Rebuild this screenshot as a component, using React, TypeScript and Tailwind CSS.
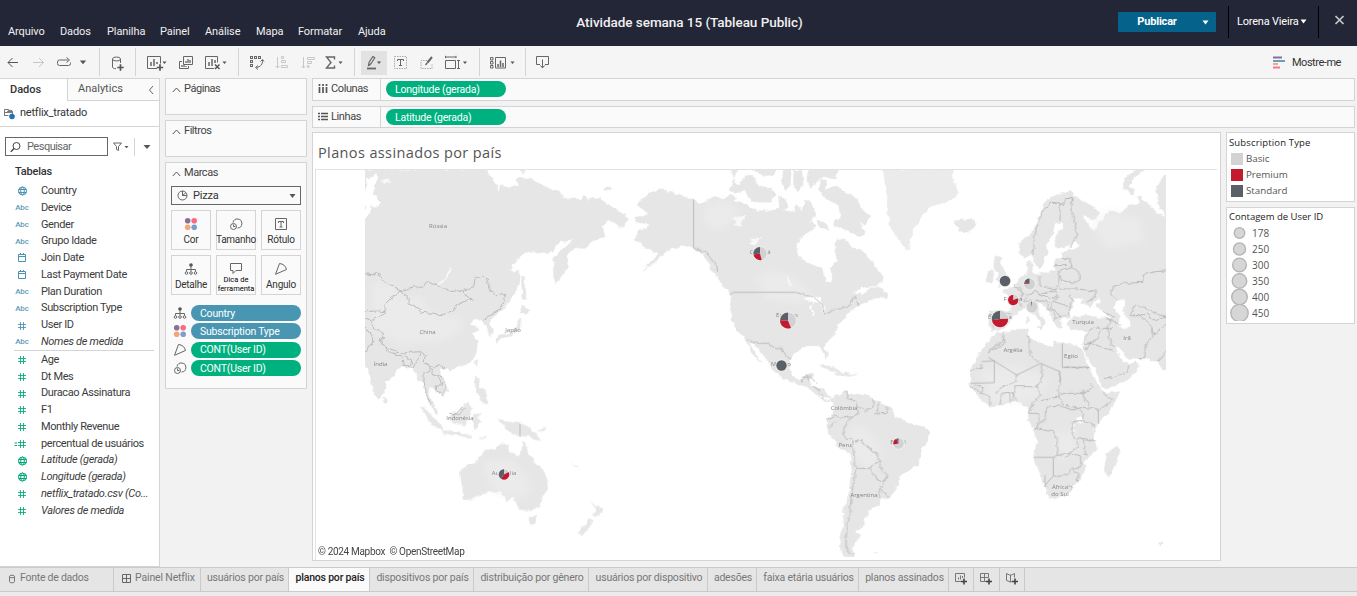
import React from "react";

type Kids = { children?: React.ReactNode };

/* ---------- Toolbar ---------- */

function Tool({ x, w, active, children }: Kids & { x: number; w: number; active?: boolean }) {
  return (
    <button className="flex h-8 shrink-0 items-center">
      <svg width={w} height={32} viewBox={`${x} 46 ${w} 32`} fill="none" stroke="#666" strokeWidth="1">
        {active && <rect x={x} y={51} width={w} height={24} fill="#e2e2e2" stroke="none" />}
        {children}
      </svg>
    </button>
  );
}

function Sep() {
  return <div className="my-0.5 w-px shrink-0 self-stretch bg-[#d4d4d4]" />;
}

function Caret({ x, y, s = 2 }: { x: number; y: number; s?: number }) {
  return <path d={`M${x - s} ${y - s / 2}h${s * 2}l${-s} ${s * 1.2}z`} fill="#555" stroke="none" />;
}

function Plus({ x, y }: { x: number; y: number }) {
  return <path d={`M${x - 3.2} ${y}h6.4M${x} ${y - 3.2}v6.4`} stroke="#555" strokeWidth="1.7" />;
}

function Toolbar() {
  return (
    <div className="flex h-8 shrink-0 items-center bg-[#f5f5f5]">
      <Tool x={0} w={25}>
        <path d="M18 62.5H8M12.5 58l-4.500 4.500 4.500 4.500" stroke="#555" />
      </Tool>
      <Tool x={25} w={26}>
        <path d="M33 62.500h10.500M39 58l4.500 4.500-4.500 4.500" stroke="#c4c4c4" />
      </Tool>
      <Tool x={51} w={48}>
        <path d="M68 65.500h-8.500a2 2 0 0 1-2-2v-1.500a2 2 0 0 1 2-2h8.500M66.500 57.500l3 2.500-3 2.500M68 65.500h.5a2 2 0 0 0 2-2v-1" />
        <Caret x={83} y={62} s={3.2} />
      </Tool>
      <Sep />
      <Tool x={100} w={35}>
        <ellipse cx="116.500" cy="59" rx="4" ry="2" />
        <path d="M112.500 59v8c0 1 1.500 1.700 3.500 1.700M120.500 59v4" />
        <Plus x={120.5} y={67.5} />
      </Tool>
      <Sep />
      <Tool x={136} w={34}>
        <path d="M157 68.500h-9.500v-12h13v7" />
        <path d="M151 66v-4M154 66v-7M157 64v-2" strokeWidth="1.500" />
        <Plus x={160} y={67.5} />
        <Caret x={164.5} y={62.5} s={2} />
      </Tool>
      <Tool x={170} w={30}>
        <path d="M183.500 56.500h9v8h-9zM182 61.500h-2.500v7h9v-2.500" />
        <path d="M186 63v-2M188 63v-4M190 63v-3M182 67v-2M184 67v-2M186 67v-1" strokeWidth="1.300" />
      </Tool>
      <Tool x={200} w={38}>
        <path d="M214 68.500h-8.500v-12h12v6" />
        <path d="M209 66v-4M212 66v-7M215 63v-3" strokeWidth="1.500" />
        <path d="M215 64.500l4.500 4.500M219.500 64.500l-4.500 4.500" stroke="#555" strokeWidth="1.500" />
        <Caret x={224.5} y={62.5} s={2} />
      </Tool>
      <Sep />
      <Tool x={239} w={30}>
        <rect x="250.500" y="56.500" width="2" height="2" />
        <rect x="254.500" y="56.500" width="2" height="2" />
        <rect x="258.500" y="56.500" width="2" height="2" />
        <rect x="250.500" y="60.500" width="2" height="2" />
        <rect x="250.500" y="64.500" width="2" height="2" />
        <path d="M262.500 60c.5 4-2 7-6 7.500M260.500 61.500l2-2 1.500 2M258 65.500l-2.500 2 2.500 2" />
      </Tool>
      <Tool x={269} w={26}>
        <path d="M277.500 57v11M275.500 66l2 2 2-2M281.500 56.500h2v2h-2zM281.500 60.500h4v2h-4zM281.500 65.500h6v2h-6z" stroke="#c8c8c8" />
      </Tool>
      <Tool x={295} w={25}>
        <path d="M303.500 57v11M301.500 66l2 2 2-2M307.500 57.500h7v2h-7zM307.500 61.500h4v2h-4zM307.500 65.500h1.500v2h-1.500z" stroke="#c8c8c8" />
      </Tool>
      <Tool x={320} w={34}>
        <path d="M334.500 59.500v-2.500h-8l4.500 5.500-4.500 5.500h8v-2.500" strokeWidth="1.400" />
        <Caret x={340.5} y={62.5} s={2} />
      </Tool>
      <Sep />
      <div className="w-1.5 shrink-0" />
      <Tool x={361} w={26} active>
        <path d="M367 68.500h9" strokeWidth="1.800" />
        <path d="M368.500 65.500l.5-3 3.800-6 2 1.200-3.800 6zM371 63.500l-2 2" strokeWidth="1.200" />
        <Caret x={379} y={62.5} s={2} />
      </Tool>
      <Tool x={387} w={26}>
        <rect x="394.500" y="56.500" width="12" height="12" stroke="#aaa" strokeDasharray="1.500 1" />
        <path d="M397.500 61v-1.500h6V61M400.500 60v5.500M399 65.500h3" />
      </Tool>
      <Tool x={413} w={25}>
        <path d="M427 60.500h-6v8h11v-5" stroke="#aaa" strokeDasharray="1.500 1" />
        <path d="M432 57l-4.500 5.500" strokeWidth="2" />
        <path d="M427.500 62.500l-2 2.500" strokeWidth="1.300" />
      </Tool>
      <Tool x={438} w={41}>
        <path d="M445.500 60.500h10v8h-10zM445 57h11M445.500 55.800v2.400M456 55.800v2.400M458.500 60.500v8M457 60.500h3M457 68.500h3" />
        <Caret x={465} y={62.5} s={2} />
      </Tool>
      <Sep />
      <Tool x={480} w={45}>
        <path d="M490.500 57.500h2.500v2.500h-2.500zM490.500 61.500h2.500v2.500h-2.500zM490.500 65.500h2.500v2.500h-2.500zM495.500 57.500h10v10.500h-10z" />
        <path d="M498 67v-3M500.500 67v-6.500M503 67v-4" strokeWidth="1.500" />
        <Caret x={512.5} y={62.5} s={2} />
      </Tool>
      <Sep />
      <Tool x={526} w={36}>
        <path d="M540 64.500h-3.500v-8h12v8H545M542.500 59.500v8M540.500 65.500l2 2.500 2-2.500" />
      </Tool>
      <div className="flex-1" />
      <svg className="mr-[7px] h-4 w-3" viewBox="0 0 12 16">
        <path d="M0 3.500h9" stroke="#8a6f96" strokeWidth="2" />
        <path d="M0 7h12" stroke="#6c9bc4" strokeWidth="2" />
        <path d="M0 10h5" stroke="#f0a986" strokeWidth="2" />
        <path d="M0 13.500h7" stroke="#f2788d" strokeWidth="2" />
      </svg>
      <span className="mr-4 pt-0.5 text-[11px] tracking-[-0.45px] text-[#333]">Mostre-me</span>
    </div>
  );
}

/* ---------- Header ---------- */

const MENU: [string, string][] = [
  ["Arquivo", "w-[52px]"],
  ["Dados", "w-[47px]"],
  ["Planilha", "w-[53px]"],
  ["Painel", "w-[45px]"],
  ["Análise", "w-[51px]"],
  ["Mapa", "w-[42px]"],
  ["Formatar", "w-[60px]"],
  ["Ajuda", "w-[40px]"],
];

function Header() {
  return (
    <header className="grid h-[46px] shrink-0 grid-cols-[1fr_auto_1fr] bg-[#232637] text-white">
      <nav className="flex items-end pb-[5px] pl-2 text-[11px] tracking-[-0.1px]">
        {MENU.map(([name, width]) => (
          <span key={name} className={`${width} shrink-0 leading-[18px] text-[#f0f0f0]`}>{name}</span>
        ))}
      </nav>
      <h1 className="pt-3 pl-[22px] text-[13.500px] leading-5 font-medium tracking-[-0.05px] whitespace-nowrap text-[#f0f0f0]">
        Atividade semana 15 (Tableau Public)
      </h1>
      <div className="flex items-start justify-end">
        <button className="mt-3 flex h-5 w-[98px] items-center rounded-[1px] bg-[#05628a] text-[11px] font-bold">
          <span className="w-[78px] text-center tracking-[-0.2px]">Publicar</span>
          <svg width="20" height="20" viewBox="0 0 20 20"><path d="M6.500 8.500h6l-3 4z" fill="#fff" /></svg>
        </button>
        <div className="mt-1.5 ml-3 flex h-8 w-[91px] items-center border-x border-black pl-2 text-[11px] tracking-[-0.2px] whitespace-nowrap">
          Lorena Vieira
          <svg width="8" height="8" viewBox="0 0 8 8"><path d="M1.500 1.500h6l-3 4z" fill="#fff" /></svg>
        </div>
        <svg className="mt-3.5 mr-3 ml-[15px]" width="11" height="12" viewBox="0 0 11 12">
          <path d="M1.500 2l8 8M9.500 2l-8 8" stroke="#c9c9cf" strokeWidth="1.700" />
        </svg>
      </div>
    </header>
  );
}

/* ---------- Data pane ---------- */

type Kind = "globe" | "abc" | "date" | "num" | "calc";

function FieldIcon({ kind, green }: { kind: Kind; green?: boolean }) {
  const c = green ? "#00a878" : "#4a93b0";
  if (kind === "abc") return <span className="w-[18px] text-center text-[8px] font-medium tracking-[-0.1px] text-[#5c9ab5]">Abc</span>;
  return (
    <svg width="18" height="12" viewBox="0 0 18 12" fill="none" stroke={c} strokeWidth="1">
      {kind === "globe" && (
        <>
          <circle cx="9.500" cy="6" r="4" />
          <ellipse cx="9.500" cy="6" rx="1.800" ry="4" />
          <path d="M5.500 4.500h8M5.500 7.500h8" />
        </>
      )}
      {kind === "date" && <path d="M5.500 2.500h7v7h-7zM5.500 4.500h7M7.500 1v2M10.500 1v2" />}
      {(kind === "num" || kind === "calc") && <path d="M7.500 2v8M10.500 2v8M5 4.500h8M5 7.500h8" opacity=".85" />}
      {kind === "calc" && <path d="M1.500 5h2.500M1.500 7.500h2.500" />}
    </svg>
  );
}

type Field = { n: string; k: Kind; i?: boolean };

const DIMENSIONS: Field[] = [
  { n: "Country", k: "globe" },
  { n: "Device", k: "abc" },
  { n: "Gender", k: "abc" },
  { n: "Grupo Idade", k: "abc" },
  { n: "Join Date", k: "date" },
  { n: "Last Payment Date", k: "date" },
  { n: "Plan Duration", k: "abc" },
  { n: "Subscription Type", k: "abc" },
  { n: "User ID", k: "num" },
  { n: "Nomes de medida", k: "abc", i: true },
];

const MEASURES: Field[] = [
  { n: "Age", k: "num" },
  { n: "Dt Mes", k: "num" },
  { n: "Duracao Assinatura", k: "num" },
  { n: "F1", k: "num" },
  { n: "Monthly Revenue", k: "num" },
  { n: "percentual de usuários", k: "calc" },
  { n: "Latitude (gerada)", k: "globe", i: true },
  { n: "Longitude (gerada)", k: "globe", i: true },
  { n: "netflix_tratado.csv (Co...", k: "num", i: true },
  { n: "Valores de medida", k: "num", i: true },
];

function FieldRow({ f, green }: { f: Field; green?: boolean }) {
  return (
    <li className="flex h-[16.780px] items-center pl-[13px]">
      <FieldIcon kind={f.k} green={green} />
      <span className={`ml-2.5 text-[11px] whitespace-nowrap text-[#3c3c3c] ${f.i ? "tracking-[-0.3px] italic" : "tracking-[-0.38px]"}`}>{f.n}</span>
    </li>
  );
}

function DataPane() {
  return (
    <aside className="flex w-40 shrink-0 flex-col border-r border-[#d4d4d4] bg-white">
      <div className="flex h-[23px] border-t border-[#d4d4d4] text-[11px]">
        <div className="w-[67px] pt-0.5 pl-2.5 leading-[18px] font-medium text-[#333]">Dados</div>
        <div className="flex flex-1 items-center justify-between border-b border-l border-[#d4d4d4] bg-[#fafafa] pr-1 pl-2.5 text-[#555]">
          Analytics
          <svg width="8" height="10" viewBox="0 0 8 10" fill="none" stroke="#666"><path d="M6 1L2.500 5 6 9" /></svg>
        </div>
      </div>
      <div className="flex h-[26px] items-center border-b border-[#d4d4d4] pl-1 text-[11px] text-[#333]">
        <svg width="12" height="12" viewBox="0 0 12 12" fill="none" stroke="#777">
          <path d="M.5 1.500v6.500M.5 1.500h4l1 1M.5 4.500h4M.5 7.500h4M3.500 3.500h5v5" />
          <ellipse cx="6" cy="3.500" rx="2.500" ry="1.200" />
          <circle cx="8" cy="8.500" r="2.800" fill="#2273b0" stroke="none" />
        </svg>
        <span className="ml-1 tracking-[-0.22px]">netflix_tratado</span>
      </div>
      <div className="mt-2.5 flex h-[19px] items-center pl-[5px]">
        <div className="flex h-[19px] w-[103px] items-center border border-[#666] pl-1 text-[11px] text-[#666]">
          <svg width="12" height="12" viewBox="0 0 12 12" fill="none" stroke="#444"><circle cx="6.500" cy="5" r="3.500" /><path d="M4 7.500L.8 10.700" strokeWidth="1.300" /></svg>
          <span className="ml-[5px] pt-px tracking-[-0.5px]">Pesquisar</span>
        </div>
        <svg className="ml-1" width="18" height="12" viewBox="0 0 18 12">
          <path d="M1.500 2h8L6.500 5.500V9.500l-2-1V5.500z" fill="none" stroke="#666" />
          <path d="M12.500 5h4l-2 2.300z" fill="#555" />
        </svg>
        <div className="ml-1 h-[18px] w-px bg-[#d4d4d4]" />
        <svg className="ml-2" width="8" height="8" viewBox="0 0 8 8"><path d="M.5 2h7L4 6z" fill="#555" /></svg>
      </div>
      <div className="mt-[7px] h-[18px] pl-[15px] text-[11px] leading-[18px] font-medium tracking-[-0.2px] text-[#333]">Tabelas</div>
      <ul className="pt-0.5">
        {DIMENSIONS.map((f) => <FieldRow key={f.n} f={f} />)}
      </ul>
      <div className="-mt-px mr-[5px] ml-3.5 h-px shrink-0 bg-[#d4d4d4]" />
      <ul className="flex-1 pt-px">
        {MEASURES.map((f) => <FieldRow key={f.n} f={f} green />)}
      </ul>
      <div className="h-px shrink-0 bg-[#d4d4d4]" />
    </aside>
  );
}

/* ---------- Cards ---------- */

function CardTitle({ children }: Kids) {
  return (
    <div className="flex h-5 items-center pt-px pl-1.5 text-[11px] text-[#444]">
      <svg width="9" height="8" viewBox="0 0 9 8" fill="none" stroke="#555"><path d="M.8 6L4.500 2 8.200 6" /></svg>
      <span className="ml-[3px] tracking-[-0.45px]">{children}</span>
    </div>
  );
}

function Dots() {
  return (
    <svg width="14" height="14" viewBox="0 0 14 14">
      <circle cx="3.700" cy="3.700" r="2.800" fill="#8a6f96" />
      <circle cx="10.200" cy="3.700" r="2.800" fill="#fb6b80" />
      <circle cx="3.700" cy="10.200" r="2.800" fill="#f3a57c" />
      <circle cx="10.200" cy="10.200" r="2.800" fill="#7a9fcb" />
    </svg>
  );
}

function DetailIcon() {
  return (
    <svg width="14" height="14" viewBox="0 0 14 14" fill="none" stroke="#666">
      <circle cx="7" cy="3" r="1.800" fill="#555" stroke="none" />
      <path d="M7 4v5M2.500 9.500v-2h9v2" />
      <circle cx="2.500" cy="11" r="1.300" /><circle cx="7" cy="11" r="1.300" /><circle cx="11.500" cy="11" r="1.300" />
    </svg>
  );
}

function SizeIcon() {
  return (
    <svg width="14" height="14" viewBox="0 0 14 14" fill="none" stroke="#666">
      <path d="M4 5.500a4.500 4.500 0 1 1 4.500 5.500" />
      <circle cx="4.500" cy="9.500" r="3" /><path d="M4.500 7.500v2h2" />
    </svg>
  );
}

function AngleIcon() {
  return (
    <svg width="14" height="14" viewBox="0 0 14 14" fill="none" stroke="#666">
      <path d="M5.500 1.500L1.500 12.300 12.500 7.500A8 8 0 0 0 5.500 1.500z" />
    </svg>
  );
}

function LabelIcon() {
  return (
    <svg width="14" height="14" viewBox="0 0 14 14" fill="none" stroke="#666">
      <path d="M1.500 1.500h11v11h-11zM4.500 6V4.500h5V6M7 4.500v5.500M5.500 10h3" />
    </svg>
  );
}

function TipIcon() {
  return (
    <svg width="14" height="14" viewBox="0 0 14 14" fill="none" stroke="#666">
      <path d="M1.500 1.500h11v7H7l-3 3v-3H1.500z" />
    </svg>
  );
}

function MarkButton({ label, small, children }: Kids & { label: React.ReactNode; small?: boolean }) {
  return (
    <button className="flex h-10 flex-col items-center border border-[#d4d4d4] bg-[#fafafa] pt-1.5 text-[#333]">
      {children}
      {small ? (
        <span className="-mt-px text-[7.500px] leading-[9px] whitespace-nowrap text-black">{label}</span>
      ) : (
        <span className="mt-0.5 text-[10px] leading-[13px] tracking-[-0.25px] whitespace-nowrap">{label}</span>
      )}
    </button>
  );
}

function Pill({ blue, children }: Kids & { blue?: boolean }) {
  return (
    <span className={`flex h-4 items-center rounded-full pt-px pl-[9px] text-[10.500px] tracking-[-0.22px] whitespace-nowrap text-white ${blue ? "bg-[#4996b2]" : "bg-[#00b180]"}`}>
      {children}
    </span>
  );
}

function MarkRow({ icon, children }: Kids & { icon: React.ReactNode }) {
  return (
    <div className="grid h-[18.300px] grid-cols-[20px_110px] items-center">
      <span className="pl-0.5">{icon}</span>
      {children}
    </div>
  );
}

function Cards() {
  return (
    <div className="ml-[5px] flex w-[142px] shrink-0 flex-col gap-[5px] text-[#333]">
      <section className="h-[37px] border border-[#d4d4d4] bg-[#fafafa]"><CardTitle>Páginas</CardTitle></section>
      <section className="h-[37px] border border-[#d4d4d4] bg-[#fafafa]"><CardTitle>Filtros</CardTitle></section>
      <section className="h-[227px] border border-[#d4d4d4] bg-[#fafafa]">
        <CardTitle>Marcas</CardTitle>
        <div className="mx-[5px] mt-[3px] flex h-[19px] items-center border border-[#666] pr-1 pl-[5px] text-[11px]">
          <svg width="11" height="11" viewBox="0 0 11 11" fill="none" stroke="#666"><circle cx="5.500" cy="5.500" r="4.500" /><path d="M5.500 1v4.500H10M5.500 5.500L9 2.500" /></svg>
          <span className="ml-[5px] flex-1 pt-px tracking-[-0.2px]">Pizza</span>
          <svg width="7" height="6" viewBox="0 0 7 6"><path d="M.5 1h6l-3 4z" fill="#555" /></svg>
        </div>
        <div className="mx-[5px] mt-[5px] grid grid-cols-3 gap-[5px]">
          <MarkButton label="Cor"><Dots /></MarkButton>
          <MarkButton label="Tamanho"><SizeIcon /></MarkButton>
          <MarkButton label="Rótulo"><LabelIcon /></MarkButton>
          <MarkButton label="Detalhe"><DetailIcon /></MarkButton>
          <MarkButton small label={<>Dica de<br />ferramenta</>}><TipIcon /></MarkButton>
          <MarkButton label="Angulo"><AngleIcon /></MarkButton>
        </div>
        <div className="mx-[5px] mt-[9px]">
          <MarkRow icon={<DetailIcon />}><Pill blue>Country</Pill></MarkRow>
          <MarkRow icon={<Dots />}><Pill blue>Subscription Type</Pill></MarkRow>
          <MarkRow icon={<AngleIcon />}><Pill>CONT(User ID)</Pill></MarkRow>
          <MarkRow icon={<SizeIcon />}><Pill>CONT(User ID)</Pill></MarkRow>
        </div>
      </section>
    </div>
  );
}

/* ---------- Map ---------- */

const EAST_ASIA =
  "M40 14H410L418 28 440 60 446 80 451 62 480 68 507 60 500 40 520 38 545 44 572 58 600 72 628 78 638 98 690 103 705 92 712 105 745 98 770 115 800 135 815 150 835 160 826 172 822 182 800 178 775 165 758 185 765 215 740 222 720 240 707 250 690 250 665 255 650 275 657 290 655 308 640 325 618 358 611 340 610 300 612 280 630 262 642 247 662 235 666 218 650 232 632 230 615 245 610 260 598 265 575 265 560 262 525 262 505 280 478 315 490 320 506 315 508 345 503 365 490 390 478 410 455 435 443 445 420 465 415 475 430 490 430 505 418 512 412 490 400 475 395 462 380 463 358 478 378 485 388 492 366 508 382 530 380 560 372 580 350 598 325 606 300 620 295 610 272 610 275 630 290 655 297 675 278 692 262 680 248 668 240 662 235 688 250 715 262 735 262 748 245 725 232 700 229 675 222 650 205 645 198 625 185 612 160 602 145 615 125 640 105 655 105 678 85 703 72 680 60 645 55 610 46 612 40 590Z";

const ASIA_ISLANDS = [
  "M514 330L524 335 524 375 532 400 520 405 516 380Z",
  "M515 420L540 433 530 445 515 447 508 435Z",
  "M508 458L514 475 512 495 480 512 455 520 440 535 437 522 455 510 485 500 500 485Z",
  "M378 583L385 588 380 603 373 598Z",
  "M100 695L112 708 108 716 100 708Z",
  "M375 632L385 640 388 665 400 670 410 690 412 715 395 715 390 700 375 668Z",
  "M762 72L780 65 785 72 770 76Z",
];

const NORTH_AMERICA =
  "M50 120L82 87 118 71 150 82 190 95 221 103 240 117 262 105 290 96 310 102 338 90 348 98 338 108 378 118 402 135 440 138 480 132 522 142 530 118 545 140 555 105 575 110 590 150 580 158 570 172 592 182 565 200 540 220 530 240 530 268 552 287 580 300 610 315 616 345 630 357 637 330 630 310 652 288 645 260 650 222 678 222 695 248 720 252 740 270 760 295 790 335 788 350 760 362 725 368 697 385 730 387 752 368 778 362 805 390 800 400 780 398 765 400 730 415 715 420 690 440 668 462 655 480 645 510 620 530 612 545 625 570 620 582 608 560 600 545 570 545 545 552 520 565 510 590 512 620 530 642 548 645 556 628 580 628 570 650 575 663 610 672 630 700 640 705 620 700 600 690 580 675 550 665 520 650 490 642 465 622 440 585 420 560 400 530 383 525 405 560 425 595 400 570 380 530 372 518 350 495 336 465 332 430 333 395 325 375 308 362 298 345 282 325 258 282 245 262 220 250 185 240 165 250 150 250 120 275 100 295 65 320 85 300 117 268 75 245 45 225 55 195 80 188 88 178 50 172 44 157 75 152 85 145Z";

const ARCTIC = [
  "M335 15H350L330 75 345 85 375 75 382 95 410 112 445 112 470 92 455 70 418 62 400 35 380 28 355 60 345 50Z",
  "M400 15H470L455 32 420 30Z M490 15H515L510 60 498 75 485 55Z",
  "M522 15H545L550 60 535 80 520 60Z M565 15H655L648 40 610 35 570 70 560 45Z",
  "M600 45L620 45 615 75 650 60 680 85 712 98 722 130 750 155 735 182 715 170 735 205 712 215 680 195 640 180 645 165 665 160 655 120 615 100 595 75Z",
  "M475 95L495 100 505 128 480 135Z M590 165L615 175 632 198 600 195Z",
  "M-5 158L12 148 25 162 10 185-5 190Z",
  "M600 600L640 605 680 630 655 625 615 612Z M680 625L710 630 680 635Z",
];

const GREENLAND = "M-20 14H188L190 45 205 82 195 98 160 112 125 125 100 145 75 185 62 215 58 255 45 250 22 218 0 180-10 100Z";

const EUROPE =
  "M540 78L520 85 485 95 458 122 445 170 425 200 390 232 386 262 402 280 425 268 432 290 445 312 458 298 472 265 468 240 488 210 495 175 515 172 520 188 497 215 495 245 525 248 555 232 570 240 545 255 515 262 518 278 495 282 490 305 502 315 480 320 440 328 425 325 430 300 420 285 410 295 412 322 395 335 380 355 362 368 338 378 360 400 362 440 325 440 298 437 296 480 305 500 330 495 350 485 368 452 390 438 412 430 430 450 452 468 455 488 468 470 447 445 440 418 455 415 475 440 490 465 500 488 518 490 510 465 538 460 540 440 555 400 580 400 575 415 600 425 625 400 635 410 620 420 640 440 665 460 625 458 590 450 545 458 530 475 540 498 570 495 600 500 590 520 580 550 600 590 620 620 632 655 640 672 680 660 720 640 747 605 735 590 722 600 700 592 685 565 675 545 690 552 715 580 740 580 770 582 800 590 822 615H835V160L800 145 780 120 760 112 755 95 745 95 750 115 715 120 690 150 672 138 650 140 640 160 625 175 612 195 600 190 588 172 578 150 615 165 628 145 610 125 575 105 560 95Z";

const EUROPE_ISLANDS = [
  "M320 272L335 280 330 300 345 320 360 340 355 362 325 368 335 350 320 345 328 325 312 310 312 285Z",
  "M295 318L312 315 308 350 288 352Z",
  "M192 168L210 165 245 162 260 180 235 202 205 198 210 185 195 178Z",
  "M735 15L705 40 700 70 728 92 735 75 715 62 738 30 765 15Z",
  "M830 20L800 65 803 112 830 162Z",
  "M408 458L416 455 415 472 410 475Z M440 485L458 480 455 495Z",
];

const AFRICA =
  "M590-113L612-110 640-122 685-123 683-105 695-92 725-80 755-70 762-85 790-80 830-75 850-55 860-25 872 5 890 35 910 70 960 65 935 115 900 155 885 175 880 200 892 240 850 275 858 300 838 330 810 365 775 385 750 388 735 350 720 310 700 260 712 215 700 175 685 155 685 115 660 100 640 95 600 105 572 112 540 85 512 50 510 0 535-45 555-75Z";

const SOUTH_AMERICA =
  "M105 80L138 62 150 75 195 72 215 85 240 100 275 115 285 140 330 160 370 170 388 185 382 215 362 240 355 285 330 300 297 320 295 345 262 388 236 382 242 405 205 422 205 435 190 445 193 465 165 485 183 495 165 520 155 540 165 552 160 562 130 560 118 510 132 470 130 420 145 385 155 290 150 250 118 235 80 180 82 150 100 128 100 100Z";

const OCEANIA = [
  "M180 275L190 262 235 240 255 210 285 208 292 198 305 192 330 195 325 215 355 230 365 210 372 186 380 200 385 225 410 250 440 285 443 318 430 350 418 382 390 390 370 392 352 375 340 348 322 362 300 335 275 333 240 345 215 358 190 360 188 325Z",
  "M387 412L408 410 407 428 398 435 390 430Z",
  "M292 118L312 120 320 128 345 125 375 132 395 150 425 182 400 178 385 165 360 170 335 158 318 145Z",
  "M150 100L170 98 190 78 205 68 215 85 205 110 195 135 160 130 152 118Z",
  "M58 77L78 88 100 115 125 135 125 152 105 140 85 115Z",
  "M125 152L165 155 215 168 215 175 170 165 130 160Z",
  "M220 105L245 100 230 112 245 125 235 130 232 145 222 145Z",
  "M575 362L585 378 608 385 598 405 585 412 580 405 590 392Z",
  "M570 412L580 420 565 445 548 465 532 458 555 435Z",
  "M410 155L438 140 430 152Z M515 250L538 262 528 260Z M240 175L260 170 255 178Z",
];

function Borders() {
  return (
    <g fill="none" stroke="#b0b0b0" strokeWidth="2.400" strokeLinejoin="round">
      <g filter="url(#rough)">
        <g transform="translate(350 165) scale(.3333)">
          <path d="M45 325L65 330 80 322 105 355 130 362 152 378 170 372 195 365 222 368 232 350 260 362 285 370 305 380 342 375 372 365 375 340 398 334 412 345 418 375 440 392 467 388 460 415 445 438 420 450 398 467" />
          <path d="M152 378L172 395 178 418 205 430 215 442 255 445 268 452 310 440 318 420 345 410 368 402 345 392 342 375" />
          <path d="M152 378L120 402 105 418 105 445 62 470 45 458M105 440L80 438 45 440M62 470L72 490 100 505 100 520 90 525 102 545 158 565 180 562 215 560 230 572 222 590 250 608 262 600 290 610M45 565L72 528 62 510 45 485M105 545L110 558 155 574 160 602 182 602 185 585 162 575M215 560L205 580 185 612M222 590L240 605 240 618 222 628 222 650 230 690 240 715M250 608L245 625 265 632 275 660 255 660 258 680 275 686 288 675 288 655 270 628M295 745L325 748 345 728" />
        </g>
        <g transform="translate(620 165) scale(.3333)">
          <path d="M221 250L235 250 245 265 258 258 270 275 290 300 293 320M528 382L560 392 580 395 608 420 612 450 640 435 660 432 690 422 695 400 708 398 715 420M383 526L420 535 445 535 468 552 485 548 498 575 514 578M548 655L545 640 572 635 590 655" />
        </g>
        <g transform="translate(890 165) scale(.3333)">
          <path d="M428 270L435 210 445 165 462 130 485 112 510 118 510 168M485 112L522 118 528 100 545 95 548 115 542 130 552 165 562 212 540 248M528 100L545 95 550 105 540 120" />
          <path d="M515 280L540 282 545 305 565 320 570 345 550 355 515 345 505 320 530 310 545 305M490 302L530 302M505 320L508 355 495 375 450 362 448 330M495 375L505 392 480 400 448 390 440 378 412 392 395 380 372 362M508 372L560 372 620 378 610 400 590 412M540 390L550 410 535 425 508 415 490 410 505 392M448 390L470 380 495 380M412 392L405 410 440 405 470 410 490 418 480 430 500 440 510 455 490 465M510 455L540 450M298 448L312 450 308 490M325 440L362 450M388 365L400 385 385 405 395 428M470 410L475 435 490 440 495 460M535 425L540 445M440 405L455 415" />
          <path d="M828 318L795 320 760 330 758 352 700 355 668 365 662 385 680 405M720 452L735 420 765 430 790 440 828 460M735 452L770 448 800 468 828 452M720 452H750L785 485 790 510 828 480M640 440L675 455M645 455L670 470 690 478M665 460L650 490 665 540 672 550M665 490H600L580 540 600 535 665 555M630 495L625 520 600 535M578 545L590 555 600 530M785 490L785 520 765 540 765 578M720 600L710 625 640 642M745 578L765 578M805 590L828 560" />
        </g>
        <g transform="translate(800 370) scale(.3333)">
          <path d="M610-112L612-80 570-55 563-50M610-88L565-55M685-105L688-70 692-45 722-20M787-8L868-8M650 12L648 35 600 55 590 70M545-20V-5L510 0M722-20L728 15 712 50 645 50 640 65 650 95M712 50L722 75 700 100 690 125M780 5L782 40 770 60 780 80 722 92M782 70H850L880 50 872 40M850 58L850 80 870 112 900 118 940 90 908 70M512 50L540 62 550 72 568 82 570 110M525 45L550 50 545 70M600 105L605 70 640 65M628 65L632 100M640 65L640 95M780 80L790 105 835 115 850 112 870 115M835 115L850 130 848 150 820 155 815 160 820 180 815 195 830 208 850 205 890 215M738 112L780 108 820 120 835 115M738 112L735 150 705 175 760 185 768 200 775 250 765 262M685 130L718 130 718 155 705 175M848 150L885 170M765 262L790 252 815 245 835 230 830 215M735 318V340L738 350M760 318L790 318 820 295 842 290 842 258 815 250 795 262M820 295L835 318 828 330 842 328M850 205L858 255 848 250M805 350L818 348 810 360" />
          <path d="M138 62L142 85 170 95 175 130 155 140 132 172 132 200 158 210 160 245 168 295 155 370 150 430 140 460 138 530 150 550 160 552M170 105L195 125 222 105 218 85M235 100L232 130M258 108L262 130 225 132M83 150L105 135 120 145 155 140M88 172L110 155M158 215L185 208 192 225 230 250 238 275 205 295 168 295M238 275L245 300 260 315 250 335 230 325 205 295M262 320L240 360 265 380M240 360L235 380M60 60L40 50M0 30L20 15 28 35M70 85L60 70" />
        </g>
      </g>
      <g transform="translate(620 165) scale(.3333)">
        <path d="M221 103V250M330 388L342 382H528" />
      </g>
      <g transform="translate(800 370) scale(.3333)">
        <path d="M565-38L650 15 722-20 780 5V37M787-8V-80M787-8H868M583-28V38L512 40M583-28L545-25M895 118V160M765 262H700M760 265V318L735 345" />
      </g>
      <g strokeWidth=".8"><path d="M520 424V437M453 415L457 413 462 407" /></g>
    </g>
  );
}

function slice(cx: number, cy: number, r: number, a: number, b: number) {
  const p = (t: number) => {
    const q = (t * Math.PI) / 180;
    return `${(cx + r * Math.sin(q)).toFixed(2)} ${(cy - r * Math.cos(q)).toFixed(2)}`;
  };
  return `M${cx} ${cy}L${p(a)}A${r} ${r} 0 ${b - a > 180 ? 1 : 0} 1 ${p(b)}Z`;
}

/* x, y, radius, end angle of Basic, end angle of Premium (clockwise from the top) */
const PIES: [number, number, number, number, number][] = [
  [760, 253.5, 6.6, 165, 262],
  [788, 320.5, 8, 158, 272],
  [781.5, 365.5, 5.2, 0, 0],
  [1005, 281, 5.3, 0, 0],
  [1029.5, 284, 5.4, 272, 290],
  [1013.2, 300, 5.2, 70, 360],
  [1032, 307, 5.4, 346, 354],
  [1000, 319, 8.2, 88, 262],
  [504, 474.5, 5.2, 62, 215],
  [898.5, 443.5, 5.2, 258, 335],
];

function Pie({ p: [x, y, r, a, b] }: { p: [number, number, number, number, number] }) {
  return (
    <g>
      <circle cx={x} cy={y} r={r + 1} fill="#ededed" />
      {b === 0 && <circle cx={x} cy={y} r={r} fill="#5b6068" />}
      {b > 0 && (
        <>
          <path d={slice(x, y, r, 0, a)} fill="#d2d2d2" />
          <path d={slice(x, y, r, a, b === 360 ? 359.9 : b)} fill="#c41a2f" />
          {b < 360 && <path d={slice(x, y, r, b, 360)} fill="#5b6068" />}
        </>
      )}
    </g>
  );
}

const PLACES: [string, number, number][] = [
  ["Rússia", 438, 227.5], ["China", 427.5, 334], ["Japão", 513, 332], ["Índia", 380.5, 366], ["Indonésia", 460, 419.5],
  ["Canadá", 760, 254], ["Estados", 787, 317], ["México", 781, 366], ["França", 1013, 301], ["Espanha", 1000, 319],
  ["Turquia", 1083, 323.5], ["Irã", 1127, 339.5], ["Argélia", 1013, 351.5], ["Egito", 1071, 358], ["Colômbia", 844, 410],
  ["Peru", 845, 446.5], ["Brasil", 898, 444], ["Argentina", 864, 496.5], ["África", 1060, 488.5], ["do Sul", 1060, 495.5],
  ["Austrália", 504, 474.5],
];

function WorldMap() {
  return (
    <svg className="block" width="904" height="390" viewBox="316 170 904 390">
      <defs>
        <clipPath id="extent"><rect x="365" y="170" width="801" height="387" /></clipPath>
        <filter id="rough" filterUnits="userSpaceOnUse" x="316" y="165" width="904" height="395" colorInterpolationFilters="sRGB">
          <feTurbulence type="fractalNoise" baseFrequency="0.18" numOctaves="3" seed="4" />
          <feDisplacementMap in="SourceGraphic" scale="4.500" xChannelSelector="R" yChannelSelector="G" />
        </filter>
        <filter id="soft" filterUnits="userSpaceOnUse" x="316" y="165" width="904" height="395">
          <feGaussianBlur stdDeviation="4" />
        </filter>
      </defs>
      <g clipPath="url(#extent)">
        <g filter="url(#rough)">
          <g fill="#e6e6e6" stroke="#e9e9e9" strokeWidth="1.500" strokeLinejoin="round">
            <g transform="translate(350 165) scale(.3333)">
              <path d={EAST_ASIA} />
              {ASIA_ISLANDS.map((d) => <path key={d} d={d} />)}
              <path d="M510 14L525 15 520 25Z" />
            </g>
            <g transform="translate(620 165) scale(.3333)">
              <path d={NORTH_AMERICA} />
              {ARCTIC.map((d) => <path key={d} d={d} />)}
            </g>
            <g transform="translate(890 165) scale(.3333)">
              <path d={GREENLAND} fill="#ebebeb" />
              <path d={EUROPE} />
              {EUROPE_ISLANDS.map((d) => <path key={d} d={d} />)}
            </g>
            <g transform="translate(800 370) scale(.3333)">
              <path d={AFRICA} />
              <path d={SOUTH_AMERICA} />
              <path d="M952 225L958 245 945 290 930 320 915 312 912 290 920 265 918 252Z" />
              <path d="M5 35L35 48 62 82 85 92 105 84 100 95 75 95 50 75 20 50Z" />
              <path d="M215 547L235 546 225 549Z M1080 518H1089V524H1080Z M100 10L140 8 155 18 110 16Z" />
            </g>
            <g transform="translate(400 380) scale(.3333)">{OCEANIA.map((d) => <path key={d} d={d} />)}</g>
          </g>
          <g fill="#fff">
            <g transform="translate(350 165) scale(.3333)">
              <path d="M45 85L52 40 70 35 78 20 85 40 72 60 70 85 90 115 80 125 65 120 60 145 45 162Z" />
              <path d="M95 45L115 40 120 50 100 60Z M300 305L303 320 290 340 275 355 262 356 285 340Z" fill="#f8f8f8" />
            </g>
            <g transform="translate(620 165) scale(.3333)">
              <path d="M335 160L355 155 378 150 375 162 362 172 368 185 340 180 352 170Z M388 215L405 222 432 213 415 225 405 242 388 235 400 228Z M500 330L508 340 518 365 510 368 502 350Z" fill="#f8f8f8" />
              <path d="M550 400L575 390 600 400 605 415 580 410 575 435 585 445 580 452 572 430 578 408 560 406Z M598 415L615 425 612 440 605 440 608 430Z M605 448L630 438 625 446Z M635 433L660 432 650 438Z M588 180L605 190 640 195 645 205 610 205 590 220Z" />
            </g>
            <g transform="translate(890 165) scale(.3333)">
              <path d="M702 402L680 410 665 430 690 450 685 480 700 492 722 485 720 465 708 455 695 435 710 420Z" />
              <path d="M650 128L655 125 655 145 648 145Z" />
            </g>
            <path d="M1076 418l6-1 2 4-5 3zM1073 424l1.500 0 1 7-1.500 0zM1085 440l1 6-1.500-1z" />
          </g>
        </g>
        <g fill="#f0f0f0" opacity=".5" filter="url(#soft)">
          <path d="M372 280l20 4 10 14 18-2 10 16 30 6 6 10-24 14-40 4-30-16z" />
          <path d="M754 276l16-6 22 6 20 18-12 10-34-4zM704 205l20-6 16 12-16 20-20-4z" />
          <path d="M978 372l32-8 40 14-14 22-44 4zM1090 222l20-12 30 8 6 24-40 8z" />
          <path d="M480 462l30-4 22 26-6 16-34-8zM850 424l18 4 16 26-16 20-18-22zM1052 434l20-4 8 20-20 14z" />
        </g>
        <Borders />
      </g>
      <g fontSize="6" textAnchor="middle" fill="#858585" fontFamily="'Open Sans', sans-serif">
        {PLACES.map(([n, x, y]) => <text key={n} x={x} y={y}>{n}</text>)}
      </g>
      {PIES.map((p) => <Pie key={p[0]} p={p} />)}
    </svg>
  );
}

/* ---------- Workspace ---------- */

function Shelf({ name, rows, children }: Kids & { name: string; rows?: boolean }) {
  return (
    <div className="flex h-full border border-[#d4d4d4] bg-[#fafafa] text-[11px] text-[#444]">
      <div className="flex w-[68px] items-center border-r border-[#d4d4d4] pl-[5px]">
        <svg className="mb-0.5" width="11" height="11" viewBox="0 0 11 11" fill="none" stroke="#555" strokeWidth="2">
          {rows ? <path d="M0 2.500h2M3 2.500h7M0 5.500h2M3 5.500h7M0 8.500h2M3 8.500h7" strokeWidth="1.300" /> : <path d="M1.500 1v2M1.500 4v6M5 1v2M5 4v6M8.500 1v2M8.500 4v6" strokeWidth="1.700" />}
        </svg>
        <span className="ml-0.5 tracking-[-0.4px]">{name}</span>
      </div>
      <div className="ml-[5px] w-[120px] pt-0.5">{children}</div>
    </div>
  );
}

const TYPES: [string, string][] = [["Basic", "bg-[#d3d3d3]"], ["Premium", "bg-[#c41a2f]"], ["Standard", "bg-[#5b6068]"]];
const SIZES: [string, number][] = [["178", 5.3], ["250", 6.1], ["300", 6.9], ["350", 7.3], ["400", 7.8], ["450", 8.7]];

function Legends() {
  return (
    <div className="ml-[5px] flex w-[129px] shrink-0 flex-col gap-[5px] font-['Open_Sans',sans-serif] text-[10px] text-[#333]">
      <section className="h-[70px] border border-[#d4d4d4] bg-white pt-0.5 pl-0.5">
        <h2 className="h-4 text-[9.500px] leading-4 tracking-[0.150px] whitespace-nowrap text-[#222]">Subscription Type</h2>
        {TYPES.map(([n, c]) => (
          <div key={n} className="flex h-4 items-center pl-0.5 text-[9.750px] text-[#555]">
            <span className={`h-3 w-3 ${c}`} />
            <span className="ml-[3px] pt-px">{n}</span>
          </div>
        ))}
      </section>
      <section className="h-[117px] border border-[#d4d4d4] bg-white pt-px pl-0.5">
        <h2 className="h-4 text-[9.500px] leading-4 whitespace-nowrap text-[#222]">Contagem de User ID</h2>
        {SIZES.map(([n, r]) => (
          <div key={n} className="flex h-4 items-center text-[#555]">
            <svg width="22" height="16" viewBox="0 0 22 16"><circle cx="10.500" cy="8" r={r} fill="#d6d6d6" stroke="#b3b3b3" strokeWidth="1.300" /></svg>
            <span className="ml-px pt-px">{n}</span>
          </div>
        ))}
      </section>
    </div>
  );
}

function Workspace() {
  return (
    <main className="ml-[5px] flex min-w-0 flex-1 flex-col pr-0.5">
      <div className="mb-[5px] h-[23px] shrink-0"><Shelf name="Colunas"><Pill>Longitude (gerada)</Pill></Shelf></div>
      <div className="mb-1 h-[22px] shrink-0"><Shelf name="Linhas" rows><Pill>Latitude (gerada)</Pill></Shelf></div>
      <div className="flex min-h-0 flex-1">
        <section className="relative h-[429px] w-[909px] shrink-0 border border-[#d4d4d4] bg-white pl-0.5">
          <h2 className="h-9 pl-[3px] font-['Open_Sans',sans-serif] text-[14.500px] leading-[39px] tracking-[0.380px] text-[#555]">Planos assinados por país</h2>
          <div className="mr-[3px] border-t border-l border-[#e2e2e2]"><WorldMap /></div>
          <p className="absolute bottom-0.5 left-[5px] text-[10px] leading-[13px] tracking-[-0.320px] text-[#444]">© 2024 Mapbox&nbsp; © OpenStreetMap</p>
        </section>
        <Legends />
      </div>
    </main>
  );
}

/* ---------- Sheet tabs ---------- */

const SHEETS: [string, string][] = [
  ["usuários por país", "w-[88px] text-[#777]"],
  ["planos por país", "w-[81px] bg-[#fafafa] font-medium text-[#222]"],
  ["dispositivos por país", "w-[104px] text-[#777]"],
  ["distribuição por gênero", "w-[115px] text-[#777]"],
  ["usuários por dispositivo", "w-[119px] text-[#777]"],
  ["adesões", "w-[49px] text-[#777]"],
  ["faixa etária usuários", "w-[102px] text-[#777]"],
  ["planos assinados", "w-[90px] text-[#777]"],
];

function SheetTabs() {
  return (
    <footer className="h-[29px] shrink-0 bg-[#ebebeb]">
      <div className="flex h-[25px] border-y border-[#cacaca] bg-[#e5e5e5] text-[10.500px] text-[#777]">
        <div className="flex w-[114px] items-center border-r border-[#cacaca] pb-[3px] pl-2 tracking-[-0.250px]">
          <svg className="mt-0.5 mr-1" width="8" height="10" viewBox="0 0 8 10" fill="none" stroke="#777"><ellipse cx="4" cy="2.500" rx="2.500" ry="1.300" /><path d="M1.500 2.500v5c0 .8 1 1.300 2.500 1.300s2.500-.5 2.500-1.300v-5" /></svg>
          Fonte de dados
        </div>
        <div className="flex w-[87px] items-center border-r border-[#cacaca] pb-[3px] pl-2 tracking-[-0.150px] whitespace-nowrap">
          <svg className="mr-1 shrink-0" width="9" height="9" viewBox="0 0 9 9" fill="none" stroke="#666"><path d="M.5.5h8v8h-8zM4.500.5v8M.5 4.500h8" /></svg>
          Painel Netflix
        </div>
        {SHEETS.map(([n, c]) => (
          <div key={n} className={`flex shrink-0 items-center justify-center border-r border-[#cacaca] pb-[3px] pl-0.5 tracking-[-0.200px] whitespace-nowrap ${c}`}>{n}</div>
        ))}
        {[0, 1, 2].map((i) => (
          <div key={i} className="flex w-[25.300px] shrink-0 items-center justify-center border-r border-[#cacaca] pb-[3px]">
            <svg width="14" height="14" viewBox="0 0 14 14" fill="none" stroke="#777">
              {i === 0 && <path d="M7 10.500H1.500v-8h9v4M4.500 8.500v-2M6.500 8.500v-4M8.500 7v-2" />}
              {i === 1 && <path d="M7 10.500H1.500v-8h8v4M5.500 2.500v8M1.500 6.500h8" />}
              {i === 2 && <path d="M7 10.500L5.500 11 1.500 9.500v-7l3 1.500h2l3-1.500v4M5.500 4v7" />}
              <path d="M7 10.500h6M10 7.500v6" stroke="#444" strokeWidth="1.600" />
            </svg>
          </div>
        ))}
      </div>
    </footer>
  );
}

export default function App() {
  return (
    <div className="flex h-[596px] w-[1357px] flex-col overflow-hidden bg-[#f2f2f2] font-[Roboto,sans-serif] text-[#333]">
      <Header />
      <Toolbar />
      <div className="flex min-h-0 flex-1">
        <DataPane />
        <Cards />
        <Workspace />
      </div>
      <SheetTabs />
    </div>
  );
}
